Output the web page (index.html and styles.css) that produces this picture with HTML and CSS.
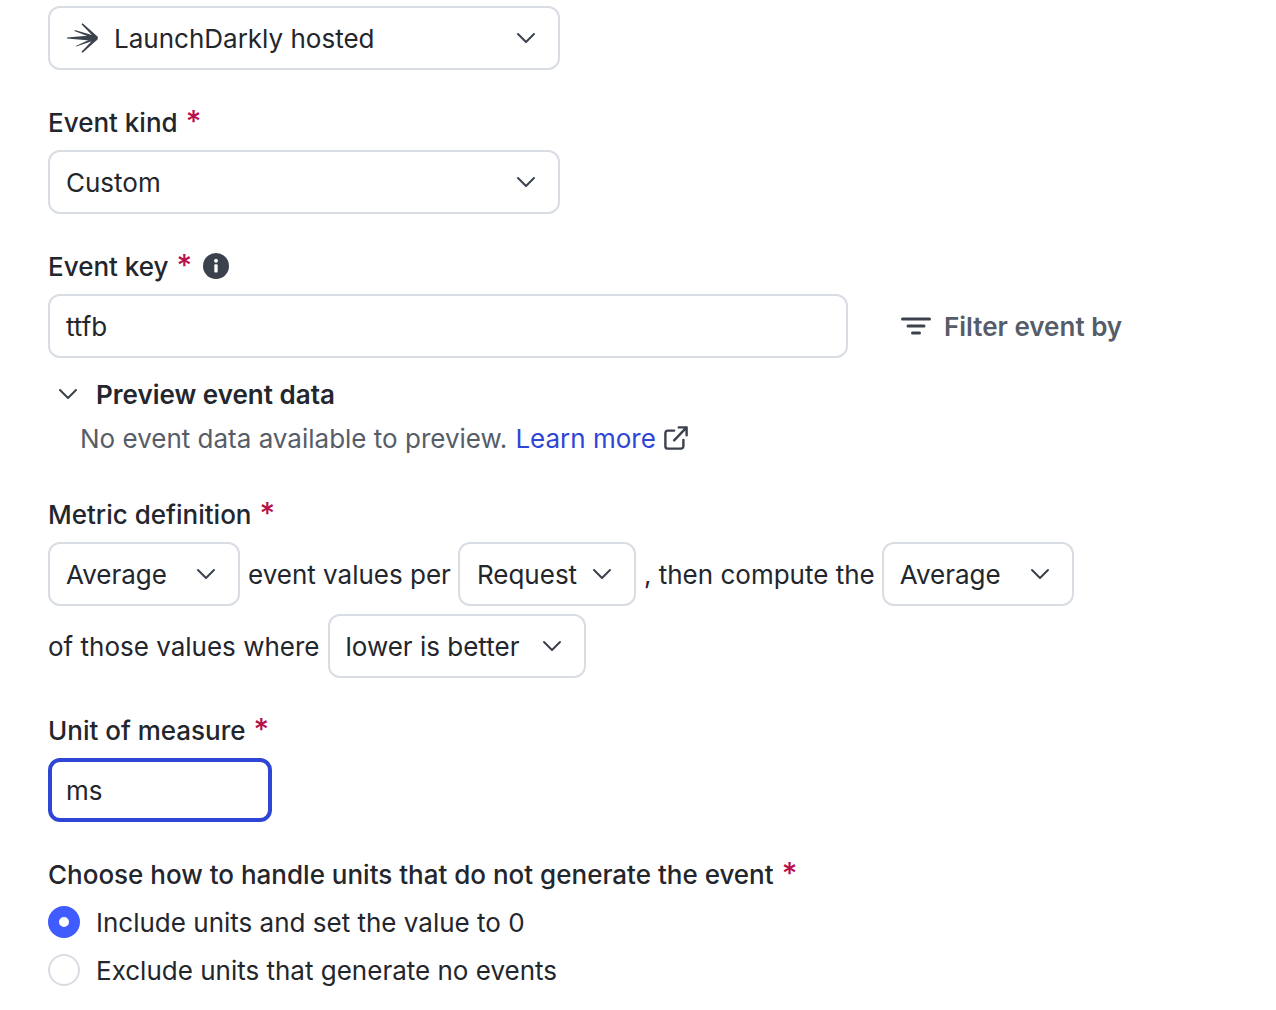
FILE: index.html
```html
<!DOCTYPE html>
<html lang="en">
<head>
    <meta charset="UTF-8">
    <title>Create metric</title>
    <link rel="stylesheet" href="styles.css">
</head>
<body>
    <svg class="defs" width="0" height="0">
        <symbol id="chevron" viewBox="0 0 20 20"><path d="M2 6l8 8 8-8" fill="none" stroke="currentColor" stroke-width="2" stroke-linecap="round" stroke-linejoin="round"/></symbol>
    </svg>
    <form class="metric-form">
        <div class="field">
            <div class="select select-wide">
                <span class="select-value">
                    <svg class="ld-logo" viewBox="0 0 32 30"><path fill="#3b424d" d="M1 14.600L21 12.800 31.800 15 21 17.200 1 15.400zM16.600 0.200L32 14 31 17.200 15.400 1.200zM8.800 7.100L31 13.400 30.200 16.400 8.400 7.900zM9.800 22.900L30.200 13.600 31 16.600 10.200 23.500zM15.400 28.800L31 12.800 32 16 16.600 29.800z"/></svg>
                    LaunchDarkly hosted
                </span>
                <svg class="chevron"><use href="#chevron"/></svg>
            </div>
        </div>

        <div class="field">
            <label class="label"><span class="label-text">Event kind</span> <span class="req">*</span></label>
            <div class="select select-wide">
                <span class="select-value">Custom</span>
                <svg class="chevron"><use href="#chevron"/></svg>
            </div>
        </div>

        <div class="field field-tight">
            <label class="label"><span class="label-text">Event key</span> <span class="req">*</span>
                <svg class="info" viewBox="0 0 28 28"><circle cx="14" cy="14" r="14" fill="#3b424d"/><rect x="12.200" y="12" width="3.600" height="9" rx="1" fill="#fff"/><circle cx="14" cy="8.300" r="2.100" fill="#fff"/></svg>
            </label>
            <div class="key-row">
                <div class="input input-key"><span class="input-text">ttfb</span></div>
                <button type="button" class="filter-btn">
                    <svg class="filter-icon" viewBox="0 0 30 18"><path d="M1.500 2h27M7 9h16M11.500 16h7" fill="none" stroke="#3b424d" stroke-width="3" stroke-linecap="round"/></svg>
                    <span class="input-text">Filter event by</span>
                </button>
            </div>
        </div>

        <div class="preview">
            <div class="preview-head">
                <svg class="chevron"><use href="#chevron"/></svg>
                <strong>Preview event data</strong>
            </div>
            <p class="preview-body">No event data available to preview. <a href="#">Learn more</a>
                <svg class="external" viewBox="0 0 26 26"><path d="M11 5H4a2.500 2.500 0 0 0-2.500 2.500V22A2.500 2.500 0 0 0 4 24.500h14.500A2.500 2.500 0 0 0 21 22v-7M11 15.500L24.500 1.500M16 1.500h8.500V10" fill="none" stroke="#3b424d" stroke-width="2.600" stroke-linecap="round" stroke-linejoin="round"/></svg>
            </p>
        </div>

        <div class="field">
            <label class="label"><span class="label-text">Metric definition</span> <span class="req">*</span></label>
            <div class="sentence">
                <div class="select select-avg">
                    <span class="select-value">Average</span>
                    <svg class="chevron"><use href="#chevron"/></svg>
                </div>
                <span class="input-text">event values per</span>
                <div class="select select-req">
                    <span class="select-value">Request</span>
                    <svg class="chevron"><use href="#chevron"/></svg>
                </div>
                <span class="input-text">, then compute the</span>
                <div class="select select-avg select-pull">
                    <span class="select-value">Average</span>
                    <svg class="chevron"><use href="#chevron"/></svg>
                </div>
                <span class="input-text">of those values where</span>
                <div class="select select-lower">
                    <span class="select-value">lower is better</span>
                    <svg class="chevron"><use href="#chevron"/></svg>
                </div>
            </div>
        </div>

        <div class="field">
            <label class="label"><span class="label-text">Unit of measure</span> <span class="req">*</span></label>
            <div class="input input-unit"><span class="input-text">ms</span></div>
        </div>

        <div class="field">
            <label class="label label-tight"><span class="label-text">Choose how to handle units that do not generate the event</span> <span class="req">*</span></label>
            <div class="radio-row"><span class="radio radio-on"></span><span class="input-text">Include units and set the value to 0</span></div>
            <div class="radio-row"><span class="radio"></span><span class="input-text">Exclude units that generate no events</span></div>
        </div>
    </form>
</body>
</html>
```

FILE: styles.css
```css
* {
    box-sizing: border-box;
}
body {
    margin: 0;
    background: #fff;
    color: #23262c;
    font-family: Inter, "Noto Sans", sans-serif;
    font-size: 26px;
    line-height: 40px;
}
.defs {
    position: absolute;
}
.metric-form {
    padding: 6px 0 0 48px;
}
.field {
    margin-bottom: 32px;
}
.field-tight {
    margin-bottom: 15px;
}
.label {
    display: flex;
    align-items: center;
    gap: 8px;
    height: 40px;
    margin-bottom: 8px;
    font-weight: 500;
}
.label-text, .input-text {
    padding-top: 2px;
}
.label-tight {
    margin-bottom: 4px;
}
.req {
    color: #b80f4b;
    font-size: 30px;
    margin-top: -2px;
}
.select, .input {
    display: flex;
    align-items: center;
    height: 64px;
    padding: 0 22px 0 16px;
    background: #fff;
    border: 2px solid #d8dde3;
    border-radius: 12px;
}
.select {
    justify-content: space-between;
}
.select-value {
    display: flex;
    align-items: center;
    padding-top: 2px;
}
.select-wide {
    width: 512px;
}
.chevron {
    width: 20px;
    height: 20px;
    color: #3b424d;
    flex: none;
}
.ld-logo {
    width: 32px;
    height: 30px;
    margin: -2px 16px 0 0;
}
.info {
    width: 26px;
    height: 26px;
    margin-left: 3px;
}
.key-row {
    display: flex;
    align-items: center;
    gap: 53px;
}
.input-key {
    width: 800px;
}
.filter-btn {
    display: flex;
    align-items: center;
    gap: 13px;
    padding: 0;
    border: 0;
    background: none;
    color: #565d68;
    font: inherit;
    font-weight: 600;
}
.filter-icon {
    width: 30px;
    height: 18px;
}
.preview {
    margin-bottom: 33px;
}
.preview-head {
    display: flex;
    align-items: center;
    gap: 18px;
    padding-left: 10px;
    height: 44px;
}
.preview-head .chevron {
    margin-top: -2px;
}
.preview-head strong {
    font-weight: 600;
}
.preview-body {
    display: flex;
    align-items: center;
    gap: 8px;
    margin: 0;
    padding-left: 32px;
    height: 44px;
    color: #565d68;
}
.preview-body a {
    color: #2f45d6;
    text-decoration: none;
}
.external {
    width: 24px;
    height: 24px;
    margin-top: -2px;
}
.sentence {
    display: flex;
    flex-wrap: wrap;
    align-items: center;
    gap: 8px;
    width: 1060px;
}
.select-avg {
    width: 192px;
}
.select-req {
    width: 178px;
    margin-left: -1px;
    padding-left: 17px;
}
.select-pull {
    margin-left: -1px;
}
.select-lower {
    width: 258px;
    margin-left: 1px;
    padding-left: 15px;
}
.input-unit {
    width: 224px;
    border: 4px solid #2f45d6;
    padding: 0 14px;
}
.radio-row {
    display: flex;
    align-items: center;
    gap: 16px;
    height: 48px;
}
.radio {
    width: 32px;
    height: 32px;
    border: 2px solid #d8dde3;
    border-radius: 50%;
    background: #fff;
}
.radio-on {
    border: 11px solid #405bff;
}
```
